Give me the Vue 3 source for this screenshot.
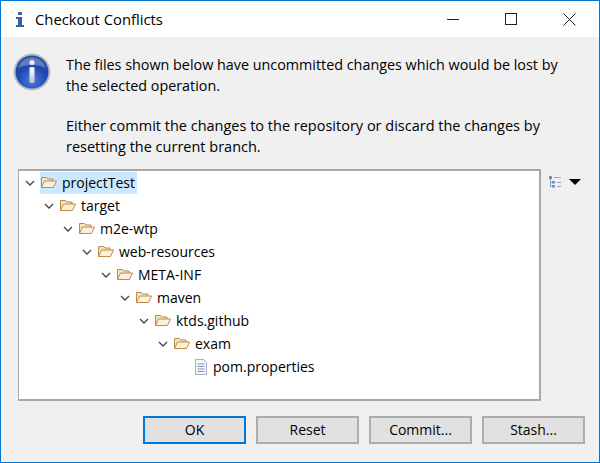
<script setup>
const rows = [
  { name: 'projectTest', level: 0, selected: true },
  { name: 'target', level: 1 },
  { name: 'm2e-wtp', level: 2 },
  { name: 'web-resources', level: 3 },
  { name: 'META-INF', level: 4 },
  { name: 'maven', level: 5 },
  { name: 'ktds.github', level: 6 },
  { name: 'exam', level: 7 },
  { name: 'pom.properties', level: 8, file: true }
]
const buttons = ['OK', 'Reset', 'Commit...', 'Stash...']
</script>

<template>
  <div class="window">
    <div class="titlebar">
      <svg class="title-icon" width="10" height="17" viewBox="0 0 10 17">
        <rect x="3" y="1" width="4" height="3" fill="#3f63ad" />
        <path d="M1 6h6v8h2v2H1v-2h2V8H1z" fill="#3a5ba6" />
      </svg>
      <span class="title">Checkout Conflicts</span>
      <div class="controls">
        <svg width="13" height="13" viewBox="0 0 13 13"><path d="M0 6.500h12" stroke="#222" fill="none" /></svg>
        <svg width="13" height="13" viewBox="0 0 13 13"><rect x=".5" y=".5" width="11" height="11" stroke="#222" fill="none" /></svg>
        <svg width="13" height="13" viewBox="0 0 13 13"><path d="M.5 .5l12 12M12.500 .5l-12 12" stroke="#222" fill="none" /></svg>
      </div>
    </div>

    <div class="body">
      <div class="message">
        <svg class="info" width="38" height="38" viewBox="0 0 38 38">
          <defs>
            <radialGradient id="ball" cx="50%" cy="75%" r="70%">
              <stop offset="0" stop-color="#4f7fe0" />
              <stop offset="0.6" stop-color="#1f47ad" />
              <stop offset="1" stop-color="#2a4c9e" />
            </radialGradient>
            <linearGradient id="letter" x1="0" y1="0" x2="0" y2="1">
              <stop offset="0" stop-color="#ffffff" />
              <stop offset="1" stop-color="#b9c3d6" />
            </linearGradient>
          </defs>
          <circle cx="19" cy="19" r="18.500" fill="#b4bac4" />
          <circle cx="19" cy="19" r="16.500" fill="url(#ball)" />
          <path d="M5 15C8 7 14 4.500 19 4.500S30 7 33 15C26 11 12 11 5 15z" fill="#8fa8e0" opacity="0.55" />
          <circle cx="19" cy="9.500" r="2.500" fill="#f2f4f8" />
          <rect x="16.500" y="14" width="5" height="16" rx="1.500" fill="url(#letter)" />
        </svg>
        <div class="text">
          <p>The files shown below have uncommitted changes which would be lost by the selected operation.</p>
          <p>Either commit the changes to the repository or discard the changes by resetting the current branch.</p>
        </div>
      </div>

      <div class="tree-area">
        <div class="tree">
          <div
            v-for="row in rows"
            :key="row.name"
            class="row"
            :style="{ paddingLeft: row.level * 19 + 'px' }"
          >
            <svg v-if="!row.file" class="twisty" width="12" height="12" viewBox="0 0 12 12">
              <path d="M2 4l4 4 4-4" fill="none" stroke="#444" stroke-width="1.300" />
            </svg>
            <span v-else class="twisty"></span>
            <span class="item" :class="{ selected: row.selected }">
              <svg v-if="!row.file" width="18" height="15" viewBox="0 0 18 15">
                <path d="M1.500 12.500V2.500h5l1.500 1.500h5v2" fill="#f6e3c0" stroke="#b98a4c" />
                <path d="M1.500 12.500l3-6.500h12l-3 6.500z" fill="#fbf0da" stroke="#c08c46" stroke-linejoin="round" />
              </svg>
              <svg v-else width="18" height="16" viewBox="0 0 18 16">
                <path d="M3.500 .5h8l3 3v12h-11z" fill="#f4f6fb" stroke="#a3aec6" />
                <path d="M5.500 5h7M5.500 7.500h7M5.500 10h7M5.500 12.500h7" stroke="#7f93bd" />
              </svg>
              <span class="label" :class="{ 'file-label': row.file }">{{ row.name }}</span>
            </span>
          </div>
        </div>
        <div class="tools">
          <svg width="13" height="13" viewBox="0 0 13 13">
            <path d="M1 1h3v3H1zM4 6h3v2.500H4zM4 10h3v2.500H4z" fill="#6d8fc4" />
            <path d="M2.500 4v7.500H4M2.500 7.500H4M6 2.500h6.500M9 7.500h4M9 11.500h4" stroke="#8aa4cc" fill="none" />
          </svg>
          <span class="arrow"></span>
        </div>
      </div>

      <div class="buttons">
        <button
          v-for="(label, i) in buttons"
          :key="label"
          :class="{ primary: i === 0 }"
        >{{ label }}</button>
      </div>
    </div>
  </div>
</template>

<style>
html, body {
  margin: 0;
  background: #f0f0f0;
}
</style>

<style scoped>
.window {
  box-sizing: border-box;
  width: 600px;
  height: 463px;
  display: flex;
  flex-direction: column;
  border: 1px solid #0078d7;
  background: #f0f0f0;
  font-family: "Open Sans", "Noto Sans", sans-serif;
  font-size: 14px;
  color: #000;
}

.titlebar {
  height: 36px;
  display: flex;
  align-items: center;
  background: #fff;
}

.title-icon {
  margin-left: 14px;
}

.title {
  margin-left: 10px;
  font-size: 14.8px;
}

.controls {
  margin-left: auto;
  display: flex;
  gap: 45px;
  padding-right: 23px;
}

.body {
  flex: 1;
  display: flex;
  flex-direction: column;
  padding: 11px 14px 0 17px;
}

.message {
  display: flex;
}

.info {
  margin: 5px 0 0 -5px;
  flex: none;
}

.text {
  margin-left: 15px;
  width: 505px;
  font-size: 14.35px;
  line-height: 20.5px;
}

.text p {
  margin: 7px 0 20px;
}

.text p:last-child {
  margin: 0;
  font-size: 14.5px;
}

.tree-area {
  display: flex;
  margin-top: 12px;
}

.tree {
  box-sizing: border-box;
  width: 523px;
  height: 232px;
  padding: 0 0 0 5px;
  background: #fff;
  border: 2px solid #a8a8a8;
  border-left-width: 1px;
}

.row {
  height: 23px;
  display: flex;
  align-items: center;
}

.twisty {
  width: 12px;
  height: 12px;
  flex: none;
}

.item {
  display: flex;
  align-items: center;
  height: 22px;
  margin-left: 4px;
  padding-right: 2px;
}

.item.selected {
  background: #cce8ff;
}

.label {
  margin-left: 4px;
}

.file-label {
  margin-left: 3px;
}

.tools {
  display: flex;
  align-items: center;
  align-self: flex-start;
  gap: 8px;
  margin: 6px 0 0 7px;
}

.arrow {
  width: 0;
  height: 0;
  border-left: 6px solid transparent;
  border-right: 6px solid transparent;
  border-top: 6px solid #000;
}

.buttons {
  display: flex;
  justify-content: flex-end;
  gap: 10px;
  margin-top: 15px;
}

button {
  box-sizing: border-box;
  width: 103px;
  height: 28px;
  padding: 0 0 2px;
  background: #e1e1e1;
  border: 2px solid #adadad;
  font: inherit;
  color: #000;
}

button.primary {
  border-color: #0078d7;
}
</style>
